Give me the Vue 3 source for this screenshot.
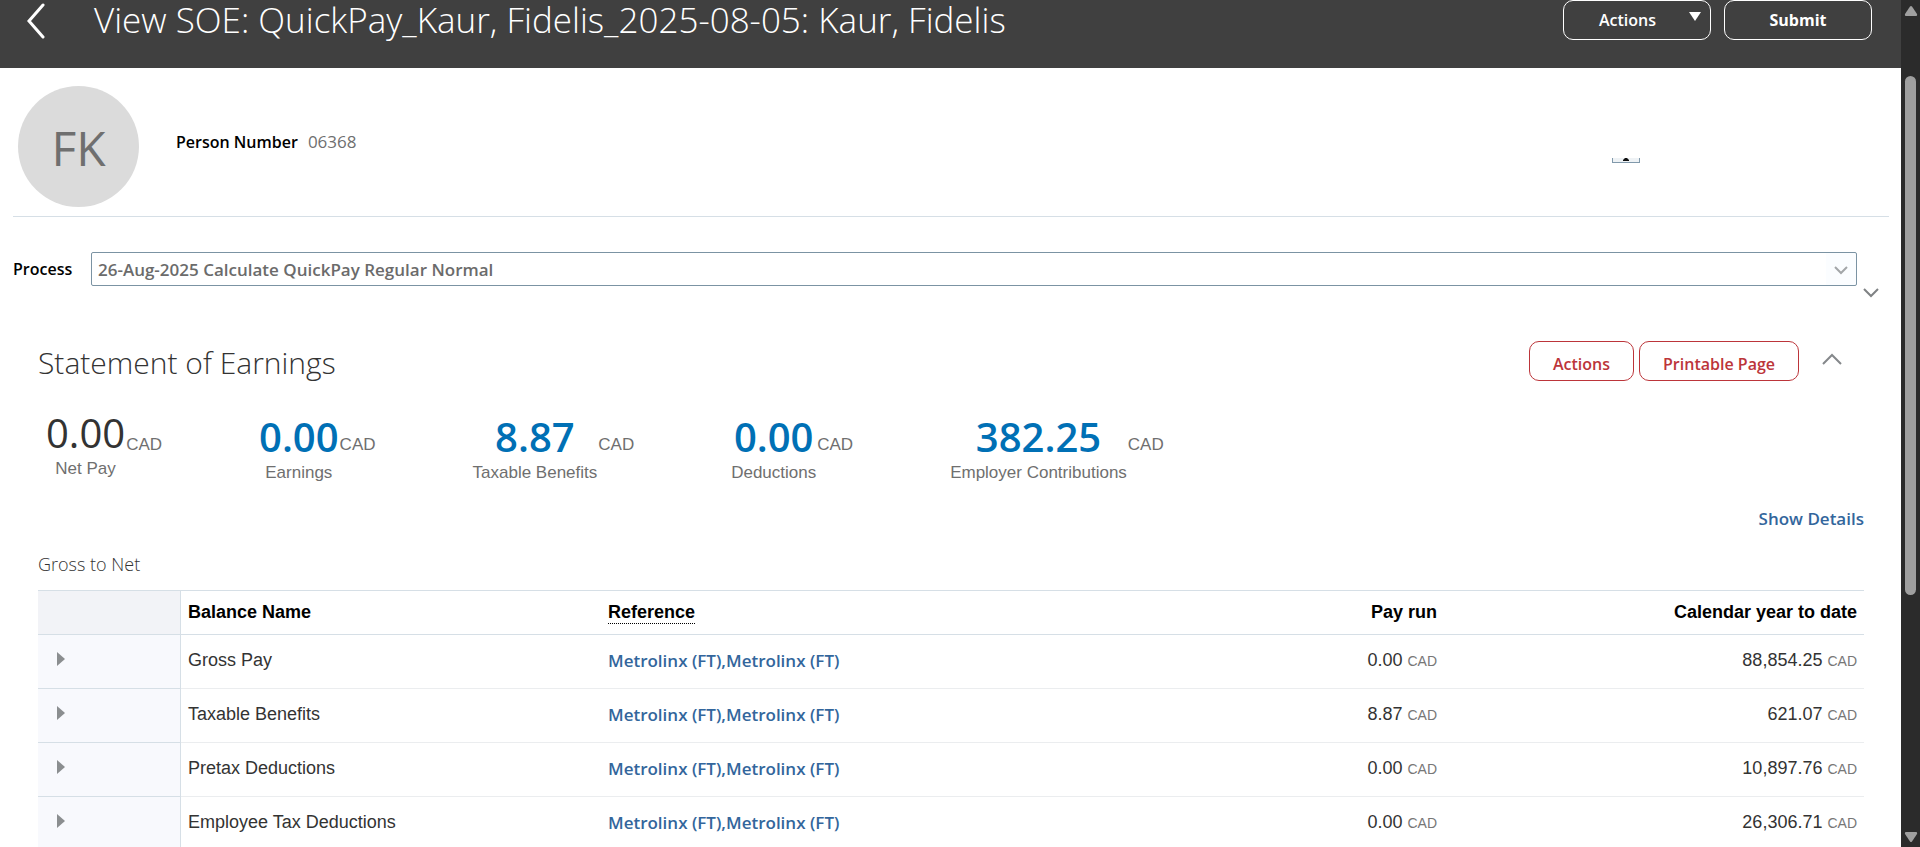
<script setup>
const summary = [
  { value: '0.00', label: 'Net Pay', plain: true },
  { value: '0.00', label: 'Earnings' },
  { value: '8.87', label: 'Taxable Benefits' },
  { value: '0.00', label: 'Deductions' },
  { value: '382.25', label: 'Employer Contributions' },
]

const reference = 'Metrolinx (FT),Metrolinx (FT)'
const balances = [
  { name: 'Gross Pay', run: '0.00', ytd: '88,854.25' },
  { name: 'Taxable Benefits', run: '8.87', ytd: '621.07' },
  { name: 'Pretax Deductions', run: '0.00', ytd: '10,897.76' },
  { name: 'Employee Tax Deductions', run: '0.00', ytd: '26,306.71' },
]
</script>

<template>
  <div class="shell">
    <main class="page">
      <header class="topbar">
        <button class="icon-btn back" aria-label="Back">
          <svg width="20" height="36" viewBox="0 0 20 36"><path d="M17 2 L3 18 L17 34" fill="none" stroke="#fff" stroke-width="3" stroke-linecap="round" stroke-linejoin="miter" /></svg>
        </button>
        <h1>View SOE: QuickPay_Kaur, Fidelis_2025-08-05: Kaur, Fidelis</h1>
        <div class="topbar-actions">
          <button class="btn light menu">
            <span>Actions</span>
            <svg width="12" height="9" viewBox="0 0 12 9"><path d="M0 0 H12 L6 9 Z" fill="#fff" /></svg>
          </button>
          <button class="btn light submit">Submit</button>
        </div>
      </header>

      <section class="person">
        <div class="avatar">FK</div>
        <dl>
          <dt>Person Number</dt>
          <dd>06368</dd>
        </dl>
        <button class="stepper" aria-label="Collapse">
          <svg width="6" height="3" viewBox="0 0 6 3"><path d="M0 3 V2 L2 0 H4 L6 2 V3 Z" fill="#111" /></svg>
        </button>
      </section>

      <section class="process">
        <label for="process">Process</label>
        <div class="select-wrap">
          <select id="process">
            <option>26-Aug-2025 Calculate QuickPay Regular Normal</option>
          </select>
          <svg class="select-arrow" width="14" height="9" viewBox="0 0 14 9"><path d="M1 1 L7 7 L13 1" fill="none" stroke="#a3a6a8" stroke-width="2" /></svg>
        </div>
        <button class="icon-btn expand" aria-label="Expand">
          <svg width="16" height="10" viewBox="0 0 16 10"><path d="M1 1 L8 8 L15 1" fill="none" stroke="#7f8284" stroke-width="2" /></svg>
        </button>
      </section>

      <section class="statement">
        <div class="statement-head">
          <h2>Statement of Earnings</h2>
          <div class="statement-actions">
            <button class="btn red">Actions</button>
            <button class="btn red">Printable Page</button>
            <button class="icon-btn collapse" aria-label="Collapse section">
              <svg width="22" height="14" viewBox="0 0 22 14"><path d="M2 12 L11 3 L20 12" fill="none" stroke="#85888b" stroke-width="2" /></svg>
            </button>
          </div>
        </div>

        <ul class="summary">
          <li v-for="item in summary" :key="item.label" :class="{ plain: item.plain }">
            <div class="figure">
              <span v-if="item.plain" class="amount">{{ item.value }}</span>
              <a v-else href="#" class="amount">{{ item.value }}</a>
              <span class="caption">{{ item.label }}</span>
            </div>
            <span class="currency">CAD</span>
          </li>
        </ul>

        <div class="details"><a href="#">Show Details</a></div>

        <h3>Gross to Net</h3>
        <table>
          <colgroup>
            <col class="c-toggle"><col class="c-data"><col><col class="c-data"><col class="c-data">
          </colgroup>
          <thead>
            <tr>
              <th class="toggle" aria-label="Expand"></th>
              <th>Balance Name</th>
              <th><abbr>Reference</abbr></th>
              <th class="num">Pay run</th>
              <th class="num">Calendar year to date</th>
            </tr>
          </thead>
          <tbody>
            <tr v-for="row in balances" :key="row.name">
              <td class="toggle">
                <button class="icon-btn" :aria-label="'Expand ' + row.name">
                  <svg width="8" height="14" viewBox="0 0 8 14"><path d="M0 0 L8 7 L0 14 Z" fill="#8b8e90" /></svg>
                </button>
              </td>
              <td>{{ row.name }}</td>
              <td><a href="#">{{ reference }}</a></td>
              <td class="num">{{ row.run }} <small>CAD</small></td>
              <td class="num">{{ row.ytd }} <small>CAD</small></td>
            </tr>
          </tbody>
        </table>
      </section>
    </main>

    <div class="scrollbar" aria-hidden="true">
      <svg width="14" height="10" viewBox="0 0 14 10"><path d="M6 0.5 Q7 -0.5 8 0.5 L13 8 Q13.500 10 12 10 H2 Q0.500 10 1 8 Z" fill="#9f9f9f" /></svg>
      <div class="track"><div class="thumb"></div></div>
      <svg width="14" height="10" viewBox="0 0 14 10"><path d="M6 9.500 Q7 10.500 8 9.500 L13 2 Q13.500 0 12 0 H2 Q0.500 0 1 2 Z" fill="#9f9f9f" /></svg>
    </div>
  </div>
</template>

<style>
body {
  background: #fff;
}
</style>

<style scoped>
* {
  box-sizing: border-box;
}
.shell {
  display: flex;
  height: 100vh;
  overflow: hidden;
  font-family: "Open Sans", "Noto Sans", sans-serif;
  font-size: 17px;
  color: #333;
}
.page {
  flex: 1;
  min-width: 0;
  overflow: hidden;
}
h1, h2, h3, dl, dd, ul {
  margin: 0;
  padding: 0;
  font-weight: 300;
}
button {
  font: inherit;
  margin: 0;
  cursor: pointer;
}
a {
  color: #33669c;
  text-decoration: none;
  font-weight: 600;
}
svg {
  display: block;
}
.icon-btn {
  padding: 0;
  border: 0;
  background: none;
}
.topbar {
  display: flex;
  align-items: flex-start;
  height: 68px;
  padding: 0 29px 0 26px;
  background: #404040;
  color: #fff;
}
.back {
  padding-top: 3px;
}
h1 {
  flex: 1;
  margin-left: 48px;
  font-size: 35px;
  line-height: 40px;
  white-space: nowrap;
}
.topbar-actions {
  display: flex;
  gap: 13px;
}
.btn {
  height: 40px;
  border: 1px solid;
  border-radius: 10px;
  background: none;
  font-size: 16px;
  font-weight: 600;
  white-space: nowrap;
}
.light {
  width: 148px;
  padding: 0;
  border-color: #fff;
  color: #fff;
}
.submit {
  font-weight: 700;
}
.menu {
  display: grid;
  grid-template-columns: 1fr 12px;
  align-items: center;
  padding: 0 9px 0 2px;
}
.menu svg {
  margin-bottom: 8px;
}
.person {
  display: flex;
  align-items: center;
  height: 149px;
  margin: 0 12px 0 13px;
  padding: 10px 0 2px 5px;
  border-bottom: 1px solid #d6dfe6;
}
.avatar {
  width: 121px;
  height: 121px;
  border-radius: 50%;
  background: #dbdbdb;
  color: #6f6f6f;
  font-size: 48px;
  line-height: 124px;
  text-align: center;
}
.person dl {
  display: flex;
  align-items: baseline;
  gap: 10px;
  margin-left: 37px;
  padding-bottom: 10px;
}
.person dt {
  color: #000;
  font-size: 16px;
  font-weight: 600;
}
.person dd {
  color: #6f6f6f;
  font-weight: 400;
}
.stepper {
  display: flex;
  align-items: flex-end;
  justify-content: center;
  width: 28px;
  height: 5px;
  margin: 28px 249px 0 auto;
  padding: 0 0 1px;
  border: 1px solid #8199ab;
  border-top: 0;
  background: #eef2f5;
}
.process {
  display: flex;
  align-items: center;
  margin-top: 27px;
  padding: 0 22px 0 13px;
}
.process label {
  width: 78px;
  color: #000;
  font-size: 16px;
  font-weight: 600;
}
.select-wrap {
  flex: 1;
  position: relative;
}
.select-wrap select {
  display: block;
  width: 100%;
  height: 34px;
  padding: 0 40px 0 6px;
  border: 1px solid #7b93a3;
  border-radius: 2px;
  appearance: none;
  background: linear-gradient(to left, #fbfdff 30px, #fff 30px);
  color: #6b6b6b;
  font: 600 17px "Open Sans", "Noto Sans", sans-serif;
}
.select-arrow {
  position: absolute;
  right: 9px;
  top: 14px;
  pointer-events: none;
}
.expand {
  margin: 44px 0 -4px 6px;
  height: 10px;
}
.statement {
  padding: 0 37px 0 38px;
}
.statement-head {
  display: flex;
  justify-content: space-between;
  margin-top: 47px;
}
h2 {
  font-size: 30px;
  line-height: 44px;
}
.statement-actions {
  display: flex;
  gap: 5px;
  padding-right: 21px;
}
.red {
  padding: 5px 23px 0;
  border-color: #bc353a;
  color: #bc353a;
}
.collapse {
  height: 36px;
  margin-left: 17px;
}
.summary {
  display: flex;
  gap: 97px;
  margin: 26px 0 0 8px;
  list-style: none;
  font-family: "Liberation Sans", Arial, sans-serif;
  color: #6f6f6f;
}
.summary li {
  display: flex;
}
.figure {
  display: flex;
  flex-direction: column;
  align-items: center;
  padding-top: 4px;
}
.plain .figure {
  padding-top: 0;
}
.amount {
  font: 600 40px/44px "Open Sans", "Noto Sans", sans-serif;
  color: #0070b5;
}
.plain .amount {
  font-weight: 400;
  color: #333;
}
.caption {
  line-height: 20px;
  padding-top: 4px;
}
.currency {
  padding: 24px 0 0 1px;
  line-height: 20px;
}
.details {
  margin-top: 24px;
  line-height: 24px;
  text-align: right;
}
h3 {
  margin-top: 21px;
  font-size: 18px;
  line-height: 24px;
}
table {
  width: 100%;
  margin-top: 14px;
  border-collapse: separate;
  border-spacing: 0;
  table-layout: fixed;
  border-top: 1px solid #d6dfe6;
  font-family: "Liberation Sans", Arial, sans-serif;
  font-size: 18px;
}
.c-toggle {
  width: 143px;
}
.c-data {
  width: 23%;
}
th, td {
  height: 54px;
  padding: 0 7px 2px;
  border-bottom: 1px solid #ebedef;
  text-align: left;
  white-space: nowrap;
}
th {
  height: 44px;
  padding-bottom: 0;
  border-bottom-color: #d6dfe6;
  color: #000;
  font-weight: 700;
}
.toggle {
  padding-left: 19px;
  border-right: 1px solid #d6dfe6;
  border-bottom-color: #d6dfe6;
  background: #f8f9fd;
}
th.toggle {
  background: #f2f3f7;
}
th abbr {
  display: inline-block;
  border-bottom: 1px dotted #000;
}
td a {
  font-family: "Open Sans", "Noto Sans", sans-serif;
  font-size: 17px;
}
th.num, td.num {
  text-align: right;
}
small {
  font-size: 14px;
  color: #777;
}
.scrollbar {
  display: flex;
  flex-direction: column;
  align-items: center;
  width: 19px;
  padding: 6px 0 5px;
  background: #2b2b2b;
}
.track {
  flex: 1;
  padding: 60px 0 237px;
}
.thumb {
  width: 11px;
  height: 100%;
  border-radius: 6px;
  background: #9f9f9f;
}
</style>
